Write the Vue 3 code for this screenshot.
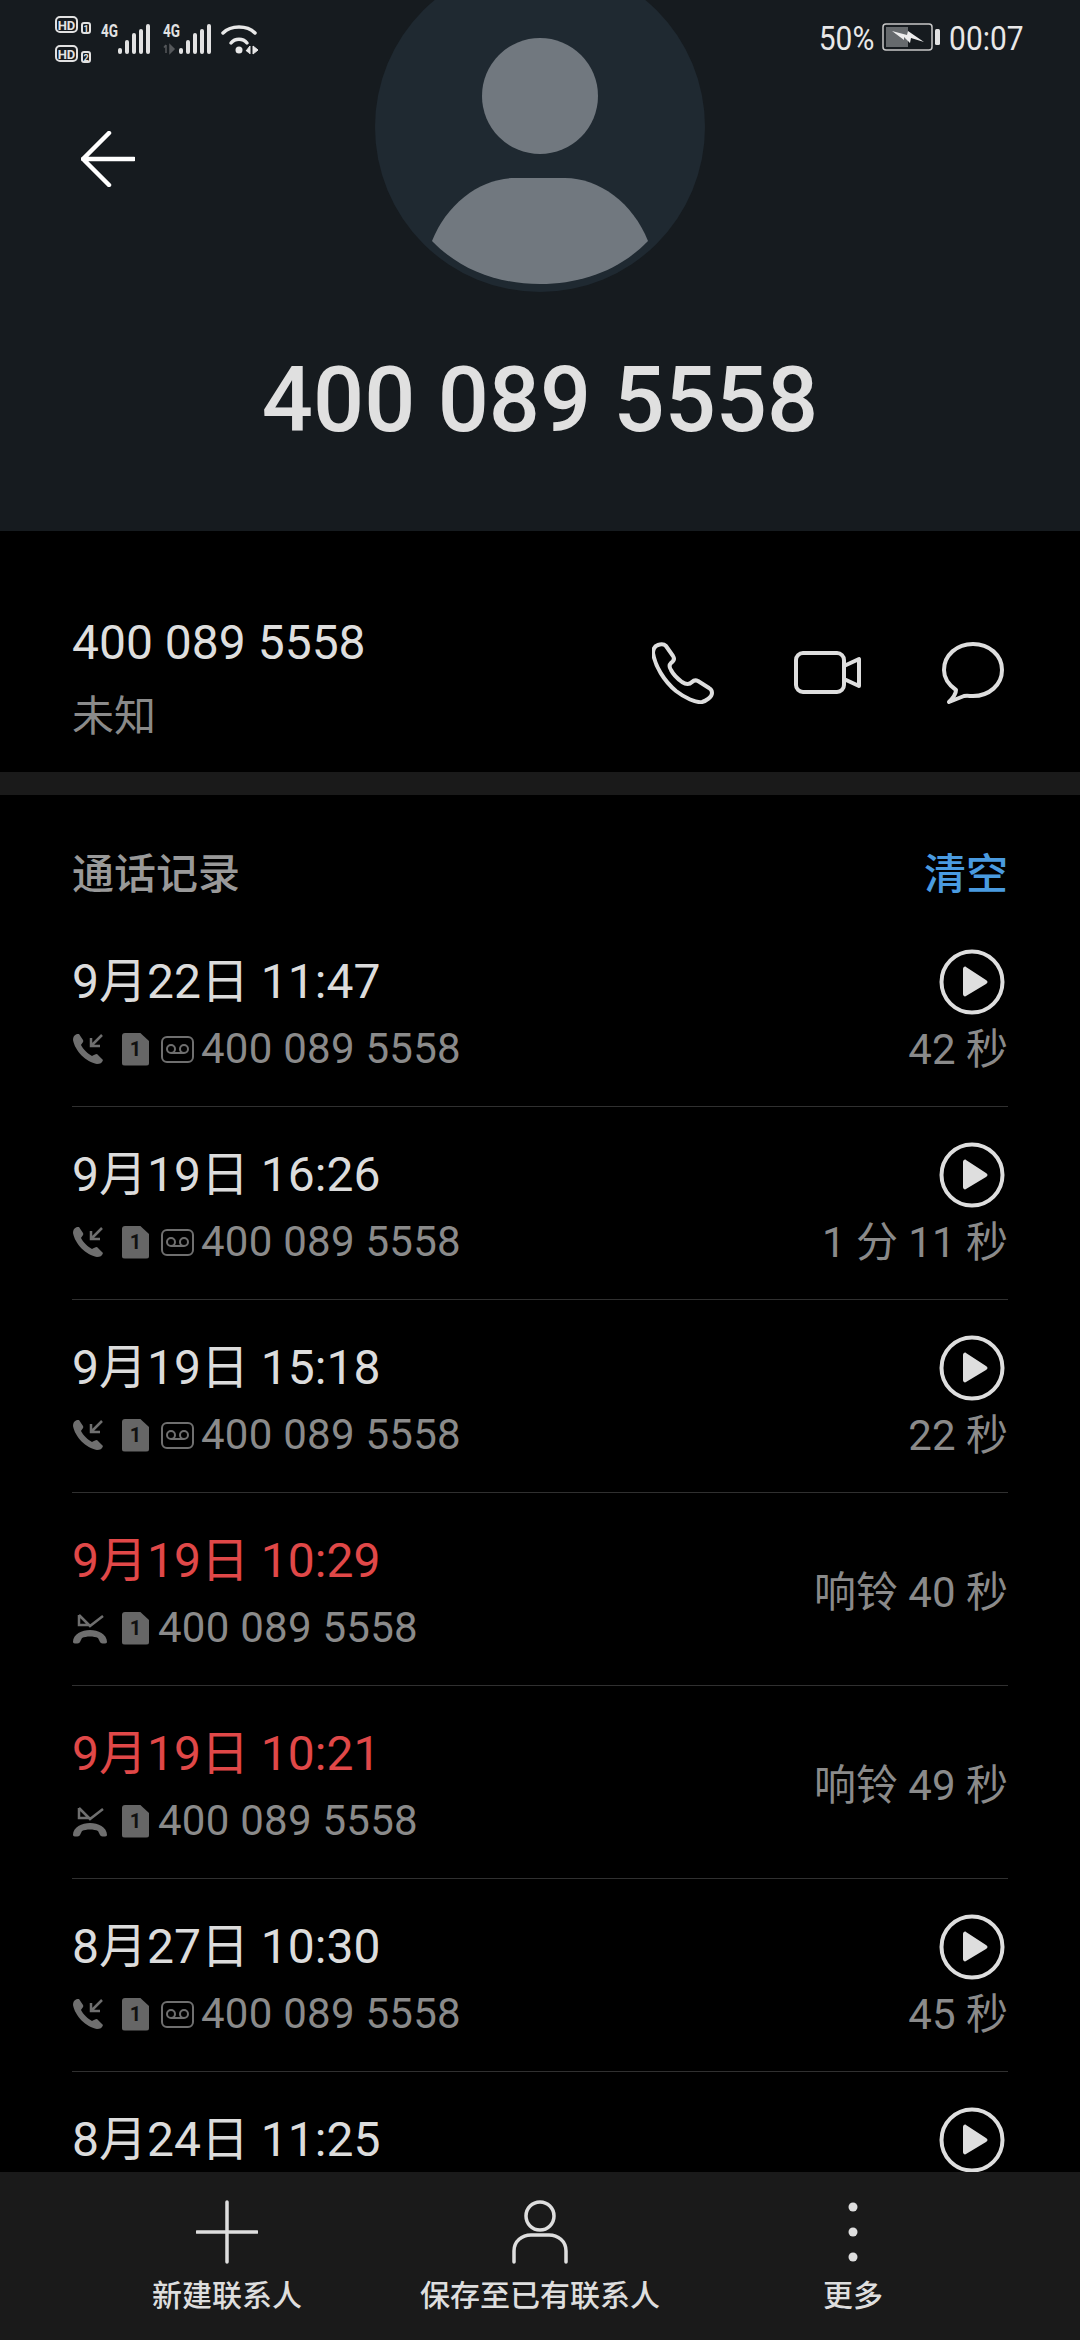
<script setup>
// 通话记录
const calls = [
  { id: 1, date: '9月22日 11:47', duration: '42 秒', recorded: true },
  { id: 2, date: '9月19日 16:26', duration: '1 分 11 秒', recorded: true },
  { id: 3, date: '9月19日 15:18', duration: '22 秒', recorded: true },
  { id: 4, date: '9月19日 10:29', duration: '响铃 40 秒', missed: true },
  { id: 5, date: '9月19日 10:21', duration: '响铃 49 秒', missed: true },
  { id: 6, date: '8月27日 10:30', duration: '45 秒', recorded: true },
  // 最后一行被底部栏遮住，只露出日期和播放键
  { id: 7, date: '8月24日 11:25', duration: '', recorded: true, partial: true }
]
const phone = '400 089 5558'
const bars = [
  { x: 0, y: 24, h: 6 },
  { x: 7, y: 16, h: 14 },
  { x: 14, y: 9, h: 21 },
  { x: 21, y: 5, h: 25 },
  { x: 28, y: 0, h: 30 }
]
</script>

<template>
  <div class="screen">
    <header class="hero">
      <!-- 头像 -->
      <svg class="avatar" width="330" height="330" viewBox="0 0 330 330">
        <circle cx="165" cy="165" r="165" fill="#1f2931" />
        <circle cx="165" cy="134" r="58" fill="#71787f" />
        <path d="M57 279C72 241 106 216 140 216H190C224 216 258 241 273 279C245 308 207 322 165 322C123 322 85 308 57 279Z" fill="#71787f" />
      </svg>

      <!-- 状态栏 -->
      <div class="status-bar">
        <svg class="status-left" width="230" height="66" viewBox="0 0 230 66">
          <g fill="none" stroke="#e2e2e2" stroke-width="2">
            <rect x="2" y="3" width="21" height="15" rx="4" />
            <rect x="2" y="32" width="21" height="15" rx="4" />
            <rect x="28" y="9" width="8" height="10" rx="2" />
            <rect x="28" y="38" width="8" height="10" rx="2" />
          </g>
          <g class="hd" fill="#e2e2e2">
            <text x="12.5" y="15.5" font-size="13">HD</text>
            <text x="12.5" y="44.5" font-size="13">HD</text>
            <text x="32" y="17.5" font-size="9">1</text>
            <text x="32" y="46.5" font-size="9">2</text>
          </g>
          <g class="net" fill="#e2e2e2">
            <text x="47" y="23" font-size="19" textLength="17" lengthAdjust="spacingAndGlyphs">4G</text>
            <text x="109" y="23" font-size="19" textLength="17" lengthAdjust="spacingAndGlyphs">4G</text>
          </g>
          <g transform="translate(64 10)" fill="#e2e2e2">
            <rect v-for="b in bars" :key="b.x" :x="b.x" :y="b.y" width="4" :height="b.h" rx="2" />
          </g>
          <g transform="translate(125 10)" fill="#e2e2e2">
            <rect v-for="b in bars" :key="b.x" :x="b.x" :y="b.y" width="4" :height="b.h" rx="2" />
          </g>
          <path d="M112 39V31M110 33.500L112 31M116 31V39L120 35Z" fill="#55585b" stroke="#55585b" stroke-width="1.500" />
          <g transform="translate(167 10)">
            <g fill="none" stroke="#e8e8e8" stroke-width="3.500" stroke-linecap="round">
              <path d="M2 9C10 1 26 1 34 9" />
              <path d="M10 19C14 14 22 14 26 19" />
            </g>
            <circle cx="18" cy="26" r="3.500" fill="#e8e8e8" />
            <path d="M25 27L29 22V30M32 22V30L37 26Z" fill="#e8e8e8" stroke="#e8e8e8" />
          </g>
        </svg>
        <div class="status-right">
          <span class="status-text">50%</span>
          <svg class="battery" width="58" height="30" viewBox="0 0 58 30">
            <rect x="1" y="1" width="49" height="26" rx="3" fill="none" stroke="#c8c8c8" stroke-width="1.500" />
            <rect x="4" y="4" width="22" height="20" fill="#666a6d" />
            <rect x="53" y="6" width="5" height="16" rx="1.500" fill="#e2e2e2" />
            <path d="M10 8L25 12L26 8L42 19L29 15L28 20L22 14L22 17Z" fill="#ededed" />
          </svg>
          <span class="status-text">00:07</span>
        </div>
      </div>

      <button class="back" aria-label="back">
        <svg width="54" height="56" viewBox="0 0 54 56" fill="none" stroke="#fff" stroke-width="4.500" stroke-linecap="round" stroke-linejoin="round">
          <path d="M53 28H2M28 2L2 28L28 54" />
        </svg>
      </button>
      <h1 class="hero-number">{{ phone }}</h1>
    </header>

    <section class="number-row">
      <div>
        <div class="number-main">{{ phone }}</div>
        <div class="number-tag">未知</div>
      </div>
      <div class="actions">
        <svg width="62" height="62" viewBox="0 0 62 62" fill="none" stroke="#dedede" stroke-width="4" stroke-linejoin="round">
          <path d="M6 3C3 4 1 7 1 11C3 24 12 39 24 49C33 56 44 61 50 60C54 59 60 55 60 51C60 49 59 47 57 46L46 39C44 38 42 38 40 40C37 43 33 42 30 40C26 37 21 32 19 28C17 25 17 23 19 21C22 19 23 17 21 14L14 4C12 2 9 2 6 3Z" />
        </svg>
        <svg width="68" height="44" viewBox="0 0 68 44" fill="none" stroke="#dedede" stroke-width="4" stroke-linejoin="round">
          <rect x="2" y="2" width="48" height="39" rx="7" />
          <path d="M50 15L65 8V35L50 28Z" />
        </svg>
        <svg width="62" height="62" viewBox="0 0 62 62" fill="none" stroke="#dedede" stroke-width="4" stroke-linejoin="round">
          <path d="M31 2C47 2 60 13 60 28C60 43 47 54 31 54C28 54 25 53.500 22 54L7 60C11 56 14 52 14 48C7 43 2 36 2 28C2 13 15 2 31 2Z" />
        </svg>
      </div>
    </section>

    <div class="gap-bar"></div>

    <!-- 通话记录列表 -->
    <main class="records">
      <div class="records-head">
        <span class="records-title">通话记录</span>
        <span class="records-clear">清空</span>
      </div>
      <div v-for="call in calls" :key="call.id" class="record">
        <div class="record-left">
          <div class="record-date" :class="{ missed: call.missed }">{{ call.date }}</div>
          <div v-if="!call.partial" class="record-sub">
            <svg v-if="call.missed" class="type-icon" width="36" height="32" viewBox="0 0 36 32">
              <path d="M7 3V13H17M7 3L18 14L31 4" fill="none" stroke="#6f6f6f" stroke-width="2.500" />
              <path d="M1 30C1 22 10 18 18 18C26 18 35 22 35 30C35 32 29 32 28 30L26 26C22 24 14 24 10 26L8 30C7 32 1 32 1 30Z" fill="#6f6f6f" />
            </svg>
            <svg v-else class="type-icon" width="36" height="32" viewBox="0 0 36 32">
              <path d="M5 1C2 2 1 4 1 7C3 18 14 29 25 31C28 31 30 30 31 27L25 21C23 21 22 22 20 23C16 21 11 16 9 12C10 10 12 9 11 7L7 1Z" fill="#6f6f6f" />
              <path d="M30 2L19 13M19 5V13H28" fill="none" stroke="#6f6f6f" stroke-width="2.500" />
            </svg>
            <span class="sim">1</span>
            <svg v-if="call.recorded" class="vm-icon" width="33" height="27" viewBox="0 0 33 27" fill="none" stroke="#6f6f6f" stroke-width="2">
              <rect x="1" y="1" width="31" height="25" rx="5" />
              <circle cx="10" cy="13" r="4" />
              <circle cx="23" cy="13" r="4" />
              <path d="M10 17H23" />
            </svg>
            <span class="record-number" :class="{ 'no-vm': call.missed }">{{ phone }}</span>
          </div>
        </div>
        <div class="record-right" :class="{ 'text-only': call.missed }">
          <svg v-if="call.recorded" class="play" width="66" height="66" viewBox="0 0 66 66">
            <circle cx="33" cy="33" r="30.500" fill="none" stroke="#dedede" stroke-width="4" />
            <path d="M24 20C24 18 26 17 27 18L47 31C49 32 49 34 47 35L27 47C26 48 24 47 24 45Z" fill="#dedede" />
          </svg>
          <span v-if="call.duration" class="record-duration">{{ call.duration }}</span>
        </div>
      </div>
    </main>

    <!-- 底部操作栏 -->
    <footer class="toolbar">
      <div class="tool">
        <svg width="62" height="64" viewBox="0 0 62 64" fill="none" stroke="#dedede" stroke-linecap="round">
          <path d="M31 2V62M1 32H61" stroke-width="3.500" />
        </svg>
        <span>新建联系人</span>
      </div>
      <div class="tool">
        <svg width="58" height="64" viewBox="0 0 58 64" fill="none" stroke="#dedede" stroke-width="3.500" stroke-linecap="round">
          <circle cx="29" cy="16" r="14" />
          <path d="M3 62V51C3 41 11 35 20 35H38C47 35 55 41 55 51V62" />
        </svg>
        <span>保存至已有联系人</span>
      </div>
      <div class="tool">
        <svg width="10" height="64" viewBox="0 0 10 64" fill="#dedede">
          <circle cx="5" cy="7" r="4.500" />
          <circle cx="5" cy="32" r="4.500" />
          <circle cx="5" cy="57" r="4.500" />
        </svg>
        <span>更多</span>
      </div>
    </footer>
  </div>
</template>

<style scoped>
.screen {
  display: flex;
  flex-direction: column;
  width: 1080px;
  height: 2340px;
  overflow: hidden;
  background: #000;
  color: #e0e0e0;
  font-family: Roboto, "Noto Sans CJK SC", sans-serif;
}

.hero {
  position: relative;
  flex: none;
  height: 531px;
  background: #161b1f;
  overflow: hidden;
}

.avatar {
  position: absolute;
  left: 375px;
  top: -38px;
}

.status-bar {
  position: relative;
  display: flex;
  justify-content: space-between;
  height: 76px;
  padding: 14px 56px 0 54px;
  box-sizing: border-box;
}

.hd {
  font-family: Roboto, sans-serif;
  font-weight: 700;
  text-anchor: middle;
}

.net {
  font-family: Roboto, sans-serif;
  font-weight: 700;
}

.status-right {
  display: flex;
  align-items: center;
  height: 48px;
  gap: 9px;
}

.status-text {
  display: inline-block;
  font-size: 34px;
  color: #e8e8e8;
  transform: scaleX(0.88);
  margin: 0 -5px;
}

.back {
  display: block;
  margin: 55px 0 0 81px;
  padding: 0;
  border: none;
  background: none;
  line-height: 0;
}

.hero-number {
  position: relative;
  margin: 161px 0 0;
  font-size: 90px;
  line-height: 106px;
  font-weight: 500;
  text-align: center;
  color: #e0e0e0;
}

.number-row {
  flex: none;
  display: flex;
  justify-content: space-between;
  box-sizing: border-box;
  height: 241px;
  padding: 81px 76px 0 72px;
}

.number-main {
  font-size: 48px;
  line-height: 62px;
  color: #dedede;
}

.number-tag {
  margin-top: 12px;
  font-size: 42px;
  line-height: 62px;
  color: #8a8a8a;
}

.actions {
  display: flex;
  align-items: center;
  align-self: flex-start;
  gap: 80px;
  height: 106px;
  margin-top: 8px;
}

.gap-bar {
  flex: none;
  height: 23px;
  background: #1a1a1a;
}

.records {
  flex: 1;
  min-height: 0;
  overflow: hidden;
  padding: 0 72px;
}

.records-head {
  display: flex;
  justify-content: space-between;
  align-items: center;
  height: 119px;
  padding-top: 32px;
  box-sizing: border-box;
  font-size: 42px;
}

.records-title {
  color: #999;
  font-weight: 500;
}

.records-clear {
  color: #4a9be0;
  font-weight: 500;
}

.record {
  display: flex;
  justify-content: space-between;
  align-items: flex-start;
  box-sizing: border-box;
  height: 193px;
  border-bottom: 1px solid #303030;
}

.record-left {
  padding-top: 40px;
}

.record-date {
  font-size: 48px;
  line-height: 56px;
  color: #dcdcdc;
}

.record-date.missed {
  color: #e04848;
}

.record-sub {
  display: flex;
  align-items: center;
  height: 56px;
  margin-top: 11px;
}

.type-icon {
  flex: none;
  margin-right: 14px;
}

.sim {
  flex: none;
  width: 27px;
  height: 33px;
  border-radius: 3px;
  clip-path: polygon(0 0, 66% 0, 100% 26%, 100% 100%, 0 100%);
  background: #666;
  color: #111;
  font-size: 20px;
  font-weight: 700;
  line-height: 33px;
  text-align: center;
}

.vm-icon {
  flex: none;
  margin-left: 12px;
}

.record-number {
  margin-left: 7px;
  font-size: 42px;
  line-height: 56px;
  letter-spacing: 0.25px;
  color: #8a8a8a;
}

.record-number.no-vm {
  margin-left: 9px;
}

.record-right {
  display: flex;
  flex-direction: column;
  align-items: flex-end;
  gap: 10px;
  padding-top: 35px;
}

.record-right.text-only {
  padding-top: 75px;
}

.play {
  margin-right: 3px;
}

.record-duration {
  font-size: 42px;
  line-height: 50px;
  color: #8a8a8a;
}

.toolbar {
  flex: none;
  display: grid;
  grid-template-columns: repeat(3, 313px);
  justify-content: center;
  height: 168px;
  background: #1a1a1a;
}

.tool {
  display: flex;
  flex-direction: column;
  align-items: center;
  padding-top: 28px;
  color: #dedede;
  font-size: 30px;
  font-weight: 500;
  line-height: 40px;
}

.tool span {
  margin-top: 12px;
  white-space: nowrap;
}
</style>

<style>
html,
body {
  margin: 0;
  background: #000;
}
</style>
